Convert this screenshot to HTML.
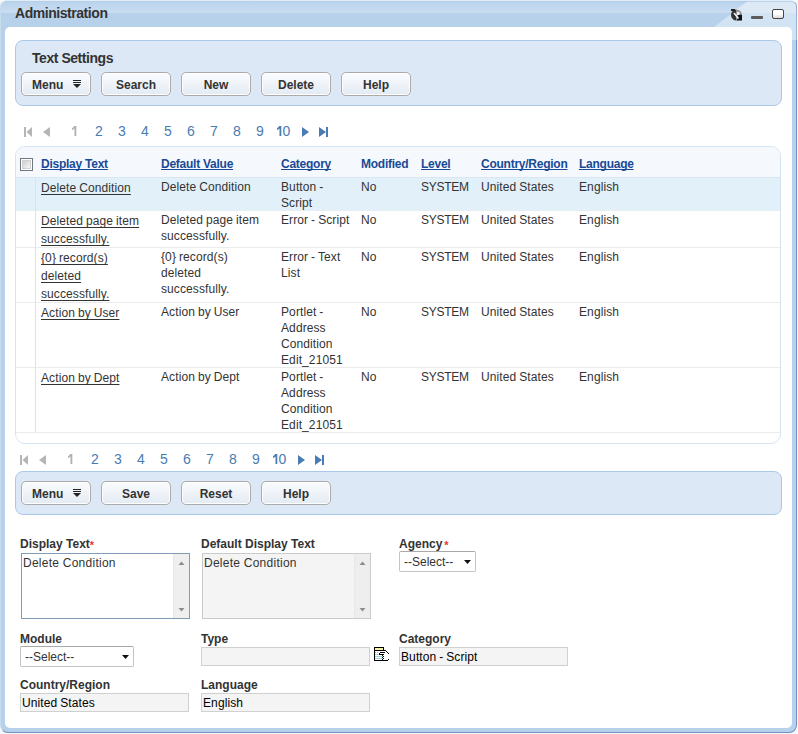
<!DOCTYPE html>
<html><head><meta charset="utf-8">
<style>
*{box-sizing:border-box;margin:0;padding:0}
html,body{width:798px;height:734px;overflow:hidden;background:#f6f8fb}
body{font-family:"Liberation Sans",sans-serif;font-size:12px;color:#333;position:relative}
.abs{position:absolute}
#frame{left:0;top:0;width:797px;height:733px;border-radius:7px 7px 8px 8px;background:#b7d1ea;border-right:1px solid #6f90c2;border-bottom:1px solid #6f90c2;border-left:1px solid #c8dcf0;border-top:1px solid #e2ecf7;overflow:hidden}
#hdrsvg{left:0;top:0}
#title{left:15px;top:5px;font-size:14px;font-weight:bold;color:#333;line-height:16px;letter-spacing:-0.45px}
#content{left:5px;top:27px;width:787px;height:701px;background:#fff;border-radius:5px}
.panel{background:#dce8f5;border:1px solid #aac9e9;border-radius:8px}
.btn{position:absolute;width:70px;height:24px;border:1px solid #ababab;border-radius:5px;background:linear-gradient(#fafcfe,#f0f4f9 45%,#e2eaf3);box-shadow:inset 0 0 0 1px #fff;font-weight:bold;font-size:12px;color:#333;text-align:center;line-height:24px}
.pg{position:absolute;font-size:14px;line-height:16px;color:#4a7bb3}
.grid{left:15px;top:146px;width:766px;height:298px;border:1px solid #d4e4f4;border-radius:10px;overflow:hidden;background:#fff}
.hl{color:#1a4a96;font-weight:bold;text-decoration:underline;text-decoration-skip-ink:none;position:absolute;line-height:16px;letter-spacing:-0.25px}
.cell{position:absolute;line-height:16px;color:#333;letter-spacing:0.1px;word-spacing:-0.5px;margin-top:1px}
.lnk{position:absolute;line-height:18px;color:#333;text-decoration:underline;text-decoration-skip-ink:none;text-underline-offset:2px;letter-spacing:0.1px;word-spacing:-0.5px;top:1px}
.lbl{position:absolute;font-weight:bold;color:#333;line-height:14px}
.inp{position:absolute;background:#f4f4f4;border:1px solid #d0d0d0;line-height:19px;padding-left:1px;color:#000;letter-spacing:0.1px;word-spacing:-0.5px}
.sel{position:absolute;background:#fff;border:1px solid #c4c4c4;border-top-color:#a8a8a8;border-radius:2px;line-height:20px;padding-left:4px}
.req{color:#e33;font-size:11px;position:relative;top:1px;font-weight:bold}
</style></head><body>
<div id="frame" class="abs"></div>
<svg id="hdrsvg" class="abs" width="798" height="40">
  <defs><clipPath id="tc"><rect x="1" y="1" width="795" height="60" rx="6" ry="6"/></clipPath></defs>
  <g clip-path="url(#tc)">
  <defs><linearGradient id="tg" x1="0" y1="0" x2="0" y2="1"><stop offset="0" stop-color="#bad3ec"/><stop offset="1" stop-color="#c9ddf1"/></linearGradient></defs><rect x="1" y="1" width="795" height="1" fill="#b7d1eb"/><rect x="1" y="2" width="795" height="11" fill="url(#tg)"/>
  <rect x="1" y="13" width="795" height="14" fill="#b7d1ea"/>
  <polygon points="714,27 748,1 796,1 796,40 780,40 780,27" fill="#d2e3f3"/>
  <polygon points="731,13 748,1 796,1 796,13" fill="#dde9f5"/>
  </g>
  <path d="M740 1 L790 1 Q796 1 796 7 L796 40" fill="none" stroke="#a9c6e6" stroke-width="1" transform="translate(0.5,0.5)" opacity="0.7"/>
</svg>
<svg class="abs" style="left:731px;top:9px" width="12" height="12" viewBox="0 0 12 12">
  <path d="M5.5 0.5 A5.5 5.5 0 0 0 5.5 11.5 Z" fill="#333"/>
  <path d="M5.5 0.5 A5.5 5.5 0 0 1 5.5 11.5 Z" fill="#999"/>
  <path d="M6 5 A5.5 5.5 0 0 1 5.5 11.5 L11 11.5 L11 6 Z" fill="#111"/>
  <rect x="0" y="0" width="4" height="2" fill="#222"/>
  <path d="M3 4 L7.5 9.5" stroke="#f0f4f8" stroke-width="1.6"/>
  <rect x="6" y="3" width="2.5" height="3" fill="#eee"/>
</svg>
<div class="abs" style="left:751px;top:16px;width:12px;height:3px;background:#5c5c5c;border-radius:1px"></div>
<div class="abs" style="left:772px;top:9px;width:12px;height:10px;border:1px solid #444;border-radius:2px;background:linear-gradient(#fff,#fff 50%,#d8d8d8)"></div>
<div id="title" class="abs">Administration</div>
<div id="content" class="abs"></div>

<!-- toolbar 1 -->
<div class="abs panel" style="left:15px;top:40px;width:767px;height:66px"></div>
<div class="abs" style="left:32px;top:50px;font-size:14px;font-weight:bold;line-height:16px;letter-spacing:-0.45px">Text Settings</div>
<div class="btn" style="left:21px;top:72px;text-align:left;padding-left:10px">Menu</div>
<div class="btn" style="left:101px;top:72px">Search</div>
<div class="btn" style="left:181px;top:72px">New</div>
<div class="btn" style="left:261px;top:72px">Delete</div>
<div class="btn" style="left:341px;top:72px">Help</div>

<!-- pager 1 -->
<svg class="abs" style="left:24px;top:127px" width="9" height="10"><rect x="0" y="0" width="2" height="10" fill="#b5b5b5"/><polygon points="8,0 8,10 2.5,5" fill="#b5b5b5"/></svg>
<svg class="abs" style="left:43px;top:127px" width="8" height="10"><polygon points="7,0 7,10 0,5" fill="#b5b5b5"/></svg>
<svg class="abs" style="left:71.6px;top:126px" width="6" height="10"><path d="M2.3 0 L4.3 0 L4.3 10 L2.5 10 L2.5 2.6 L0 4.2 L0 2.4 Z" fill="#b0b0b0"/></svg>
<div class="pg" style="left:95px;top:123px;color:#4a7bb3">2</div>
<div class="pg" style="left:118px;top:123px;color:#4a7bb3">3</div>
<div class="pg" style="left:141px;top:123px;color:#4a7bb3">4</div>
<div class="pg" style="left:164px;top:123px;color:#4a7bb3">5</div>
<div class="pg" style="left:187px;top:123px;color:#4a7bb3">6</div>
<div class="pg" style="left:210px;top:123px;color:#4a7bb3">7</div>
<div class="pg" style="left:233px;top:123px;color:#4a7bb3">8</div>
<div class="pg" style="left:256px;top:123px;color:#4a7bb3">9</div>
<svg class="abs" style="left:276.8px;top:126px" width="6" height="10"><path d="M2.3 0 L4.3 0 L4.3 10 L2.5 10 L2.5 2.6 L0 4.2 L0 2.4 Z" fill="#4a7bb3"/></svg><div class="pg" style="left:282.5px;top:123px;color:#4a7bb3">0</div>
<svg class="abs" style="left:302px;top:127px" width="8" height="10"><polygon points="0,0 0,10 7,5" fill="#4a7bb3"/></svg>
<svg class="abs" style="left:319px;top:127px" width="10" height="10"><polygon points="0,0 0,10 7,5" fill="#4a7bb3"/><rect x="7" y="0" width="2" height="10" fill="#4a7bb3"/></svg>
<div class="abs grid">
<div class="abs" style="left:0;top:0;width:764px;height:30px;background:#f5f9fd"></div>
<div class="abs" style="left:0;top:30px;width:764px;height:1px;background:#d9e7f4"></div>
<div class="abs" style="left:0;top:31px;width:764px;height:32px;background:#e1f0f9"></div>
<div class="abs" style="left:0;top:63px;width:764px;height:1px;background:#e6eef4"></div>
<div class="abs" style="left:0;top:100px;width:764px;height:1px;background:#ebebeb"></div>
<div class="abs" style="left:0;top:155px;width:764px;height:1px;background:#ebebeb"></div>
<div class="abs" style="left:0;top:220px;width:764px;height:1px;background:#ebebeb"></div>
<div class="abs" style="left:0;top:285px;width:764px;height:1px;background:#ebebeb"></div>
</div>
<div class="abs" style="left:35px;top:178px;width:1px;height:254px;background:#d6e5f4"></div>
<div class="abs" style="left:20px;top:158px;width:13px;height:13px;border:1px solid #72787f;background:#fff;padding:1px"><div style="width:9px;height:9px;border:1px solid #d2d2d2;background:linear-gradient(135deg,#cfcfcf,#f6f6f6)"></div></div>
<div class="hl" style="left:41px;top:156px;text-decoration:underline">Display Text</div>
<div class="hl" style="left:161px;top:156px;text-decoration:underline">Default Value</div>
<div class="hl" style="left:281px;top:156px;text-decoration:underline">Category</div>
<div class="hl" style="left:361px;top:156px;text-decoration:none">Modified</div>
<div class="hl" style="left:421px;top:156px;text-decoration:underline">Level</div>
<div class="hl" style="left:481px;top:156px;text-decoration:underline">Country/Region</div>
<div class="hl" style="left:579px;top:156px;text-decoration:underline">Language</div>
<div class="abs" style="left:41px;top:178px"><div class="lnk" style="position:relative;">Delete Condition</div></div>
<div class="cell" style="left:161px;top:178px">Delete Condition</div>
<div class="cell" style="left:281px;top:178px">Button -<br>Script</div>
<div class="cell" style="left:361px;top:178px">No</div>
<div class="cell" style="left:421px;top:178px;letter-spacing:-0.25px">SYSTEM</div>
<div class="cell" style="left:481px;top:178px">United States</div>
<div class="cell" style="left:579px;top:178px">English</div>
<div class="abs" style="left:41px;top:211px"><div class="lnk" style="position:relative;">Deleted page item</div><div class="lnk" style="position:relative;">successfully.</div></div>
<div class="cell" style="left:161px;top:211px">Deleted page item<br>successfully.</div>
<div class="cell" style="left:281px;top:211px">Error - Script</div>
<div class="cell" style="left:361px;top:211px">No</div>
<div class="cell" style="left:421px;top:211px;letter-spacing:-0.25px">SYSTEM</div>
<div class="cell" style="left:481px;top:211px">United States</div>
<div class="cell" style="left:579px;top:211px">English</div>
<div class="abs" style="left:41px;top:248px"><div class="lnk" style="position:relative;">{0} record(s)</div><div class="lnk" style="position:relative;">deleted</div><div class="lnk" style="position:relative;">successfully.</div></div>
<div class="cell" style="left:161px;top:248px">{0} record(s)<br>deleted<br>successfully.</div>
<div class="cell" style="left:281px;top:248px">Error - Text<br>List</div>
<div class="cell" style="left:361px;top:248px">No</div>
<div class="cell" style="left:421px;top:248px;letter-spacing:-0.25px">SYSTEM</div>
<div class="cell" style="left:481px;top:248px">United States</div>
<div class="cell" style="left:579px;top:248px">English</div>
<div class="abs" style="left:41px;top:303px"><div class="lnk" style="position:relative;">Action by User</div></div>
<div class="cell" style="left:161px;top:303px">Action by User</div>
<div class="cell" style="left:281px;top:303px">Portlet -<br>Address<br>Condition<br>Edit_21051</div>
<div class="cell" style="left:361px;top:303px">No</div>
<div class="cell" style="left:421px;top:303px;letter-spacing:-0.25px">SYSTEM</div>
<div class="cell" style="left:481px;top:303px">United States</div>
<div class="cell" style="left:579px;top:303px">English</div>
<div class="abs" style="left:41px;top:368px"><div class="lnk" style="position:relative;">Action by Dept</div></div>
<div class="cell" style="left:161px;top:368px">Action by Dept</div>
<div class="cell" style="left:281px;top:368px">Portlet -<br>Address<br>Condition<br>Edit_21051</div>
<div class="cell" style="left:361px;top:368px">No</div>
<div class="cell" style="left:421px;top:368px;letter-spacing:-0.25px">SYSTEM</div>
<div class="cell" style="left:481px;top:368px">United States</div>
<div class="cell" style="left:579px;top:368px">English</div>
<!-- pager 2 -->
<svg class="abs" style="left:20px;top:455px" width="9" height="10"><rect x="0" y="0" width="2" height="10" fill="#b5b5b5"/><polygon points="8,0 8,10 2.5,5" fill="#b5b5b5"/></svg>
<svg class="abs" style="left:39px;top:455px" width="8" height="10"><polygon points="7,0 7,10 0,5" fill="#b5b5b5"/></svg>
<svg class="abs" style="left:67.6px;top:454px" width="6" height="10"><path d="M2.3 0 L4.3 0 L4.3 10 L2.5 10 L2.5 2.6 L0 4.2 L0 2.4 Z" fill="#b0b0b0"/></svg>
<div class="pg" style="left:91px;top:451px;color:#4a7bb3">2</div>
<div class="pg" style="left:114px;top:451px;color:#4a7bb3">3</div>
<div class="pg" style="left:137px;top:451px;color:#4a7bb3">4</div>
<div class="pg" style="left:160px;top:451px;color:#4a7bb3">5</div>
<div class="pg" style="left:183px;top:451px;color:#4a7bb3">6</div>
<div class="pg" style="left:206px;top:451px;color:#4a7bb3">7</div>
<div class="pg" style="left:229px;top:451px;color:#4a7bb3">8</div>
<div class="pg" style="left:252px;top:451px;color:#4a7bb3">9</div>
<svg class="abs" style="left:272.8px;top:454px" width="6" height="10"><path d="M2.3 0 L4.3 0 L4.3 10 L2.5 10 L2.5 2.6 L0 4.2 L0 2.4 Z" fill="#4a7bb3"/></svg><div class="pg" style="left:278.5px;top:451px;color:#4a7bb3">0</div>
<svg class="abs" style="left:298px;top:455px" width="8" height="10"><polygon points="0,0 0,10 7,5" fill="#4a7bb3"/></svg>
<svg class="abs" style="left:315px;top:455px" width="10" height="10"><polygon points="0,0 0,10 7,5" fill="#4a7bb3"/><rect x="7" y="0" width="2" height="10" fill="#4a7bb3"/></svg>
<div class="abs panel" style="left:15px;top:471px;width:767px;height:44px"></div>
<div class="btn" style="left:21px;top:481px;text-align:left;padding-left:10px">Menu</div>
<div class="btn" style="left:101px;top:481px;">Save</div>
<div class="btn" style="left:181px;top:481px;">Reset</div>
<div class="btn" style="left:261px;top:481px;">Help</div>
<svg class="abs" style="left:73px;top:80px" width="9" height="9"><rect x="0" y="0" width="8" height="1" fill="#222"/><rect x="0" y="2" width="8" height="1" fill="#222"/><polygon points="0,4 8,4 4,8" fill="#222"/></svg>
<svg class="abs" style="left:73px;top:489px" width="9" height="9"><rect x="0" y="0" width="8" height="1" fill="#222"/><rect x="0" y="2" width="8" height="1" fill="#222"/><polygon points="0,4 8,4 4,8" fill="#222"/></svg>
<div class="lbl" style="left:20px;top:537px">Display Text<span class="req">*</span></div>
<div class="lbl" style="left:201px;top:537px">Default Display Text</div>
<div class="lbl" style="left:399px;top:537px">Agency<span class="req" style="margin-left:2px">*</span></div>
<div class="abs" style="left:21px;top:553px;width:169px;height:66px;border:1px solid #7f9db9;background:#fff"></div>
<div class="abs" style="left:22px;top:555px;font-size:12px;line-height:16px;padding-left:1px;letter-spacing:0.25px">Delete Condition</div>
<div class="abs" style="left:173px;top:554px;width:16px;height:64px;background:linear-gradient(90deg,#e2e5ea,#efefef 2px,#efefef)"></div>
<div class="abs" style="left:202px;top:553px;width:169px;height:66px;border:1px solid #cacaca;background:#f4f4f4"></div>
<div class="abs" style="left:203px;top:555px;font-size:12px;line-height:16px;padding-left:1px;letter-spacing:0.25px">Delete Condition</div>
<div class="abs" style="left:354px;top:554px;width:16px;height:64px;background:linear-gradient(90deg,#e6e6e6,#eeeeee 2px,#eeeeee)"></div>
<svg class="abs" style="left:178px;top:560px" width="8" height="6"><polygon points="0.5,5 6.5,5 3.5,1.5" fill="#8c8c8c"/></svg>
<svg class="abs" style="left:178px;top:607px" width="8" height="6"><polygon points="0.5,1 6.5,1 3.5,4.5" fill="#8c8c8c"/></svg>
<svg class="abs" style="left:359px;top:560px" width="8" height="6"><polygon points="0.5,5 6.5,5 3.5,1.5" fill="#8c8c8c"/></svg>
<svg class="abs" style="left:359px;top:607px" width="8" height="6"><polygon points="0.5,1 6.5,1 3.5,4.5" fill="#8c8c8c"/></svg>
<div class="sel" style="left:399px;top:551px;width:77px;height:21px">--Select--</div>
<svg class="abs" style="left:464px;top:560px" width="8" height="6"><polygon points="0,0 7,0 3.5,4" fill="#111"/></svg>
<div class="lbl" style="left:20px;top:632px">Module</div>
<div class="lbl" style="left:201px;top:632px">Type</div>
<div class="lbl" style="left:399px;top:632px">Category</div>
<div class="sel" style="left:20px;top:646px;width:114px;height:21px">--Select--</div>
<svg class="abs" style="left:122px;top:655px" width="8" height="6"><polygon points="0,0 7,0 3.5,4" fill="#111"/></svg>
<div class="inp" style="left:201px;top:647px;width:169px;height:19px"></div>
<div class="inp" style="left:399px;top:647px;width:169px;height:19px">Button - Script</div>
<div class="lbl" style="left:20px;top:678px">Country/Region</div>
<div class="lbl" style="left:201px;top:678px">Language</div>
<div class="inp" style="left:20px;top:693px;width:169px;height:19px">United States</div>
<div class="inp" style="left:201px;top:693px;width:169px;height:19px">English</div>
<svg class="abs" style="left:372px;top:645px" width="20" height="18" shape-rendering="crispEdges"><rect x="3" y="6" width="8" height="9" fill="#fff"/><rect x="3" y="3" width="8" height="2" fill="#f7f0a8"/><rect x="2" y="2" width="10" height="1" fill="#000"/><rect x="2" y="2" width="1" height="14" fill="#000"/><rect x="11" y="2" width="1" height="4" fill="#000"/><rect x="2" y="5" width="12" height="1" fill="#000"/><rect x="10" y="9" width="1" height="6" fill="#000"/><rect x="2" y="15" width="14" height="1" fill="#000"/><rect x="14" y="6" width="1" height="1" fill="#000"/><rect x="15" y="7" width="1" height="1" fill="#000"/><rect x="16" y="8" width="1" height="1" fill="#000"/><rect x="8" y="7" width="5" height="1" fill="#000"/><rect x="7" y="8" width="1" height="2" fill="#000"/><rect x="8" y="9" width="4" height="1" fill="#000"/><rect x="11" y="11" width="1" height="1" fill="#000"/><rect x="11" y="13" width="1" height="1" fill="#000"/><rect x="16" y="14" width="1" height="1" fill="#000"/><rect x="3" y="9" width="1" height="1" fill="#e8a8a0"/><rect x="4" y="9" width="1" height="1" fill="#a8d8e0"/><rect x="5" y="9" width="1" height="1" fill="#e8a8a0"/><rect x="6" y="9" width="1" height="1" fill="#a8d8e0"/><rect x="3" y="11" width="1" height="1" fill="#e8a8a0"/><rect x="4" y="11" width="1" height="1" fill="#a8d8e0"/><rect x="5" y="11" width="1" height="1" fill="#e8a8a0"/><rect x="6" y="11" width="1" height="1" fill="#a8d8e0"/><rect x="7" y="11" width="1" height="1" fill="#e8a8a0"/><rect x="8" y="11" width="1" height="1" fill="#a8d8e0"/><rect x="9" y="11" width="1" height="1" fill="#e8a8a0"/><rect x="10" y="11" width="1" height="1" fill="#a8d8e0"/><rect x="3" y="13" width="1" height="1" fill="#e8a8a0"/><rect x="4" y="13" width="1" height="1" fill="#a8d8e0"/><rect x="5" y="13" width="1" height="1" fill="#e8a8a0"/><rect x="6" y="13" width="1" height="1" fill="#a8d8e0"/><rect x="7" y="13" width="1" height="1" fill="#e8a8a0"/><rect x="8" y="13" width="1" height="1" fill="#a8d8e0"/><rect x="9" y="13" width="1" height="1" fill="#e8a8a0"/><rect x="10" y="13" width="1" height="1" fill="#a8d8e0"/><rect x="3" y="7" width="1" height="1" fill="#b0b0b0"/><rect x="5" y="7" width="1" height="1" fill="#b0b0b0"/></svg>
</body></html>
